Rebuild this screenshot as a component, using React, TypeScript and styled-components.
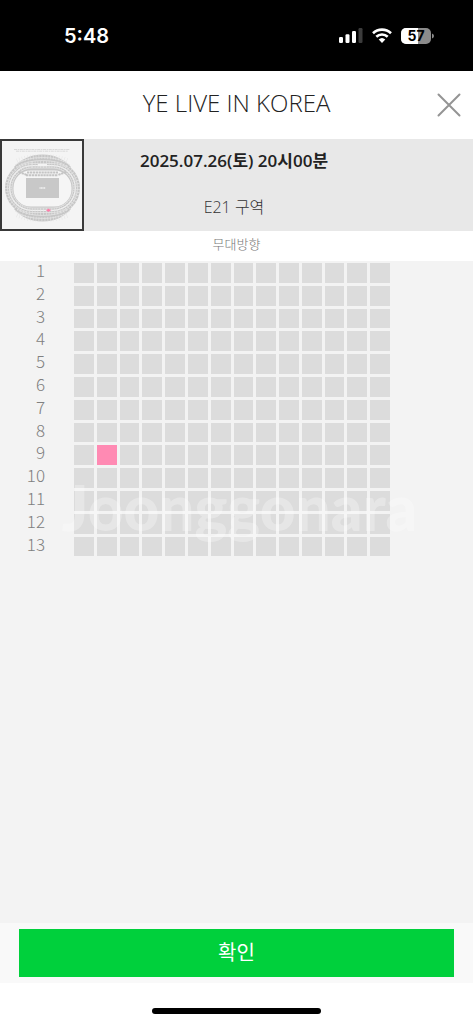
import React from 'react';
import styled, { createGlobalStyle } from 'styled-components';

const GlobalStyle = createGlobalStyle`
  *, *::before, *::after { box-sizing: border-box; }
  body { margin: 0; background: #fff; }
  body, button { font-family: "Open Sans", "Noto Sans CJK KR", sans-serif; }
`;

const Screen = styled.div`
  display: flex;
  flex-direction: column;
  min-height: 100vh;
  background: #fff;
`;

const StatusBar = styled.div`
  display: flex;
  align-items: center;
  justify-content: space-between;
  height: 71px;
  padding: 0 39px 0 64px;
  background: #000;
  color: #fff;
`;

const Clock = styled.time`
  font: 600 20px/28px Inter, sans-serif;
`;

const StatusIcons = styled.div`
  display: flex;
  align-items: center;
  gap: 9px;
`;

const Header = styled.header`
  display: grid;
  grid-template-columns: 48px 1fr 48px;
  align-items: center;
  height: 68px;
`;

const Title = styled.h1`
  grid-column: 2;
  margin: 0;
  padding-bottom: 4px;
  color: #222;
  font-size: 24px;
  font-weight: 300;
  line-height: 32px;
  text-align: center;
`;

const CloseButton = styled.button`
  display: grid;
  place-items: center;
  height: 48px;
  padding: 0;
  border: 0;
  background: none;
`;

const EventInfo = styled.section`
  display: flex;
  height: 92px;
  background: #e8e8e8;
`;

const MiniMap = styled.svg`
  flex: none;
  width: 84px;
  height: 92px;
  background: #f4f4f4;
  border: 2px solid #393939;
`;

const EventText = styled.div`
  flex: 1;
  display: flex;
  flex-direction: column;
  align-items: center;
  gap: 22px;
  padding: 10px 89px 0 0;
`;

const EventDate = styled.p`
  margin: 0;
  color: #222;
  font-size: 17px;
  font-weight: 600;
  line-height: 24px;
  white-space: nowrap;
`;

const Zone = styled.p`
  margin: 0;
  color: #333;
  font-size: 16px;
  font-weight: 300;
  line-height: 24px;
`;

const StageDirection = styled.p`
  margin: 0;
  height: 30px;
  color: #777;
  font-size: 13px;
  font-weight: 300;
  line-height: 26px;
  text-align: center;
`;

const SeatArea = styled.main`
  position: relative;
  flex: 1;
  padding: 2px 83px 16px 0;
  background: #f3f3f3;
`;

const SeatGrid = styled.div`
  display: grid;
  grid-template-columns: 71px repeat(14, 1fr);
  gap: 3px;
`;

const RowLabel = styled.span`
  height: 16px;
  padding-right: 26px;
  color: #808080;
  font-family: "Noto Sans CJK KR", sans-serif;
  font-size: 17px;
  font-weight: 300;
  line-height: 14px;
  text-align: right;
`;

const Seat = styled.button<{ $open?: boolean }>`
  aspect-ratio: 1;
  min-width: 0;
  padding: 0;
  border: 0;
  border-radius: 0;
  background: ${({ $open }) => ($open ? '#ff8ab3' : '#dcdcdc')};
`;

const Watermark = styled.span`
  position: absolute;
  top: 210px;
  left: 6px;
  right: 0;
  color: rgba(255, 255, 255, 0.3);
  font: 900 62px/72px Lato, sans-serif;
  text-align: center;
  pointer-events: none;
`;

const Footer = styled.footer`
  padding: 6px 19px;
  background: #f9f9f9;
`;

const ConfirmButton = styled.button`
  width: 100%;
  height: 48px;
  padding: 0;
  border: 0;
  background: #00d03c;
  color: #fff;
  font-size: 20px;
  font-weight: 400;
  line-height: 28px;
`;

const HomeArea = styled.div`
  display: flex;
  justify-content: center;
  height: 41px;
  padding-top: 25px;
`;

const HomeIndicator = styled.div`
  width: 169px;
  height: 6px;
  border-radius: 3px;
  background: #000;
`;

const ROWS = Array.from({ length: 13 }, (_, i) => i + 1);
const COLUMNS = Array.from({ length: 14 }, (_, i) => i + 1);

function SignalIcon() {
  return (
    <svg width="24" height="15" viewBox="0 0 24 15" aria-hidden="true">
      <rect x="0" y="9" width="4" height="6" rx="1.2" fill="#fff" />
      <rect x="6.5" y="6.3" width="4" height="8.7" rx="1.2" fill="#fff" />
      <rect x="13" y="3" width="4" height="12" rx="1.2" fill="#fff" />
      <rect x="19.5" y="0" width="4" height="15" rx="1.2" fill="#3c3c3c" />
    </svg>
  );
}

function WifiIcon() {
  return (
    <svg width="20" height="15" viewBox="0 0 20 15" aria-hidden="true">
      <g fill="none" stroke="#fff" strokeWidth="2.6">
        <path d="M1 5.2a13 13 0 0 1 18 0" />
        <path d="M4.3 8.8a8.2 8.2 0 0 1 11.4 0" />
      </g>
      <path d="M10 15l-3.3-3.4a4.8 4.8 0 0 1 6.6 0z" fill="#fff" />
    </svg>
  );
}

function BatteryIcon() {
  return (
    <svg width="33" height="16" viewBox="0 0 33 16" role="img" aria-label="57%">
      <clipPath id="cell"><rect width="30" height="16" rx="5" /></clipPath>
      <g clipPath="url(#cell)">
        <rect width="30" height="16" fill="#8b8b8b" />
        <rect width="17" height="16" fill="#fff" />
      </g>
      <path d="M31 5.5q2 .6 2 2.5t-2 2.5z" fill="#8b8b8b" />
      <text x="15" y="13" textAnchor="middle" fontFamily="Inter, sans-serif" fontSize="14" fontWeight="700" fill="#000">57</text>
    </svg>
  );
}

function StadiumMap() {
  return (
    <MiniMap viewBox="2 2 80 88" role="img" aria-label="공연장 좌석 배치도">
      <path d="M14 10.5h56M16 12.2h52" stroke="#d2d2d2" strokeWidth="0.8" strokeDasharray="3 .7 1.5 .6" />
      <path d="M14 28Q25 15.5 42.500 15.500T71 28L66 33H19ZM14 70Q25 82.500 42.500 82.500T71 70L66 65H19Z" fill="#c6c6c6" />
      <rect x="5" y="22" width="75" height="54" rx="27" fill="#c6c6c6" />
      <g fill="none" stroke="#e4e4e4" strokeWidth="0.8">
        <path d="M15 26Q25 18.500 42.500 18.500T70 26M17 28Q27 21.500 42.500 21.500T68 28M15 72Q25 79.500 42.500 79.500T70 72M17 70Q27 76.500 42.500 76.500T68 70" />
        <rect x="7.500" y="24.500" width="70" height="49" rx="24.500" />
        <rect x="12" y="29" width="61" height="40" rx="20" />
      </g>
      <rect x="9.700" y="26.700" width="65.600" height="44.600" rx="22.300" fill="none" stroke="#f0f0f0" strokeWidth="1.200" />
      <rect x="8.500" y="25.500" width="68" height="47" rx="23.500" fill="none" stroke="#e6e6e6" strokeWidth="7" strokeDasharray=".6 2.200" />
      <path d="M17 22Q27 17.500 42.500 17.500T68 22M17 76Q27 80.500 42.500 80.500T68 76" fill="none" stroke="#e6e6e6" strokeWidth="5" strokeDasharray=".6 2.200" />
      <rect x="13.500" y="31.500" width="58" height="36" rx="17" fill="#f5f5f5" />
      <path d="M19 33l8 3M66 33l-8 3M27 33.500h31M26 36.200h32" fill="none" stroke="#c4c4c4" strokeWidth="2" strokeDasharray="2.300 .6" />
      <rect x="38" y="25" width="9" height="2.2" fill="#f3f3f3" />
      <rect x="26" y="39" width="33" height="20" fill="#c8c8c8" />
      <path d="M39.5 49h6" stroke="#f1f1f1" strokeWidth="1.6" strokeDasharray="1.2 .3" />
      <path d="M46.5 71.3h4M48.500 69.800v3" stroke="#ff7da9" strokeWidth="1.6" />
    </MiniMap>
  );
}

export default function App() {
  return (
    <Screen>
      <GlobalStyle />
      <StatusBar>
        <Clock>5:48</Clock>
        <StatusIcons>
          <SignalIcon />
          <WifiIcon />
          <BatteryIcon />
        </StatusIcons>
      </StatusBar>
      <Header>
        <Title>YE LIVE IN KOREA</Title>
        <CloseButton type="button" aria-label="닫기">
          <svg width="24" height="24" viewBox="0 0 24 24" fill="none" stroke="#949494" strokeWidth="2" strokeLinecap="round">
            <path d="M1.5 1.5l21 21M22.5 1.5l-21 21" />
          </svg>
        </CloseButton>
      </Header>
      <EventInfo>
        <StadiumMap />
        <EventText>
          <EventDate>2025.07.26(토) 20시00분</EventDate>
          <Zone>E21 구역</Zone>
        </EventText>
      </EventInfo>
      <StageDirection>무대방향</StageDirection>
      <SeatArea>
        <SeatGrid>
          {ROWS.map((row) => (
            <React.Fragment key={row}>
              <RowLabel>{row}</RowLabel>
              {COLUMNS.map((col) => {
                const open = row === 9 && col === 2;
                return (
                  <Seat key={col} type="button" $open={open} disabled={!open} aria-label={`${row}열 ${col}번`} />
                );
              })}
            </React.Fragment>
          ))}
        </SeatGrid>
        <Watermark>Joonggonara</Watermark>
      </SeatArea>
      <Footer>
        <ConfirmButton type="button">확인</ConfirmButton>
      </Footer>
      <HomeArea>
        <HomeIndicator />
      </HomeArea>
    </Screen>
  );
}
